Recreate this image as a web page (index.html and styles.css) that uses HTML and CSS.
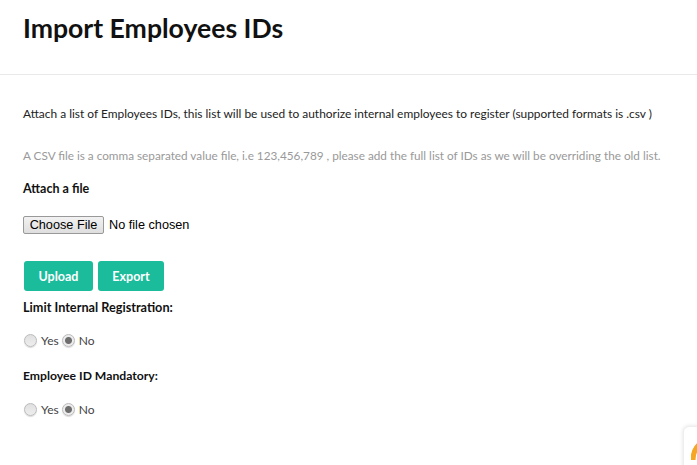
FILE: index.html
```html
<!DOCTYPE html>
<html lang="en">
<head>
    <meta charset="UTF-8">
    <meta name="viewport" content="width=device-width, initial-scale=1.0">
    <title>Import Employees IDs</title>
    <link rel="stylesheet" href="styles.css">
</head>
<body>
    <header class="page-header">
        <h1>Import Employees IDs</h1>
    </header>

    <div class="container">
        <p class="intro">Attach a list of Employees IDs, this list will be used to authorize internal employees to register (supported formats is .csv )</p>
        <p class="hint">A CSV file is a comma separated value file, i.e 123,456,789 , please add the full list of IDs as we will be overriding the old list.</p>

        <label class="field-label" for="file-upload">Attach a file</label>
        <input class="file-input" type="file" id="file-upload" accept=".csv">

        <div class="actions">
            <button class="btn btn-upload">Upload</button>
            <button class="btn btn-export">Export</button>
        </div>

        <p class="field-label limit-label">Limit Internal Registration:</p>
        <div class="radio-row">
            <label class="radio-item"><input type="radio" name="limit"> Yes</label>
            <label class="radio-item"><input type="radio" name="limit" checked> No</label>
        </div>

        <p class="field-label mandatory-label">Employee ID Mandatory:</p>
        <div class="radio-row">
            <label class="radio-item"><input type="radio" name="mandatory"> Yes</label>
            <label class="radio-item"><input type="radio" name="mandatory" checked> No</label>
        </div>
    </div>

    <div class="chat-widget">
        <svg width="14" height="24" viewBox="0 0 14 24">
            <path d="M2 21 C2 13 5 7 12 3" fill="none" stroke="#f5a623" stroke-width="5"/>
        </svg>
    </div>
</body>
</html>
```

FILE: styles.css
```css
html, body {
    height: 100%;
    overflow: hidden;
}

body {
    font-family: 'Lato', 'Noto Sans', sans-serif;
    margin: 0;
    padding: 0;
    background-color: #fff;
    color: #222;
    font-size: 12px;
}

.page-header {
    height: 74px;
    border-bottom: 1px solid #e9e9e9;
}

h1 {
    font-size: 26.6px;
    line-height: 30px;
    font-weight: 700;
    color: #111;
    margin: 0;
    padding: 13px 0 0 23px;
}

.container {
    padding: 0 23px;
}

.intro {
    margin: 31px 0 0;
    font-size: 11.93px;
    line-height: 16px;
    white-space: nowrap;
}

.hint {
    margin: 26px 0 0;
    font-size: 11.76px;
    line-height: 16px;
    color: #999;
    white-space: nowrap;
}

.field-label {
    display: block;
    margin: 0;
    font-size: 12.5px;
    font-weight: 700;
    color: #111;
    line-height: 16px;
}

label.field-label {
    margin-top: 17px;
}

.file-input {
    display: block;
    margin: 19px 0 0;
    font-family: 'Liberation Sans', Arial, sans-serif;
    font-size: 12.7px;
    color: #000;
}

.file-input::file-selector-button {
    width: 81px;
    padding: 1px 0;
    margin-right: 5px;
    border: 1px solid #999;
    border-radius: 2px;
    background: linear-gradient(#f2f2f2, #dedede);
}

.actions {
    display: flex;
    gap: 5px;
    margin: 27px 0 0 1px;
}

.btn {
    height: 30px;
    border: none;
    border-radius: 3px;
    background-color: #1abc9c;
    color: #fff;
    font-family: inherit;
    font-size: 12.5px;
    font-weight: 700;
    cursor: pointer;
}

.btn-upload {
    width: 69px;
}

.btn-export {
    width: 66px;
}

.limit-label {
    margin-top: 8px;
    font-size: 12.7px;
}

.mandatory-label {
    margin-top: 20px;
    font-size: 12.2px;
}

.radio-row {
    display: flex;
    gap: 2px;
    margin-top: 17px;
    height: 16px;
}

.radio-item {
    display: flex;
    align-items: center;
    gap: 4px;
    color: #444;
}

.radio-item input {
    appearance: none;
    width: 13px;
    height: 13px;
    margin: 0 0 0 1px;
    border: 1px solid #bbb;
    border-radius: 50%;
    background: linear-gradient(#e0e0e0, #eeeeee);
    box-shadow: 0 1px 1px rgba(0, 0, 0, 0.15);
}

.radio-item input:checked {
    background: radial-gradient(circle, #6e6e6e 0, #6e6e6e 3px, #ececec 4px);
}

.chat-widget {
    position: absolute;
    left: 683px;
    top: 426px;
    width: 40px;
    height: 60px;
    box-sizing: border-box;
    padding: 12px 0 0 7px;
    background: #fff;
    border: 1px solid #eee;
    border-radius: 6px;
    box-shadow: 0 0 4px rgba(0, 0, 0, 0.12);
}
```
